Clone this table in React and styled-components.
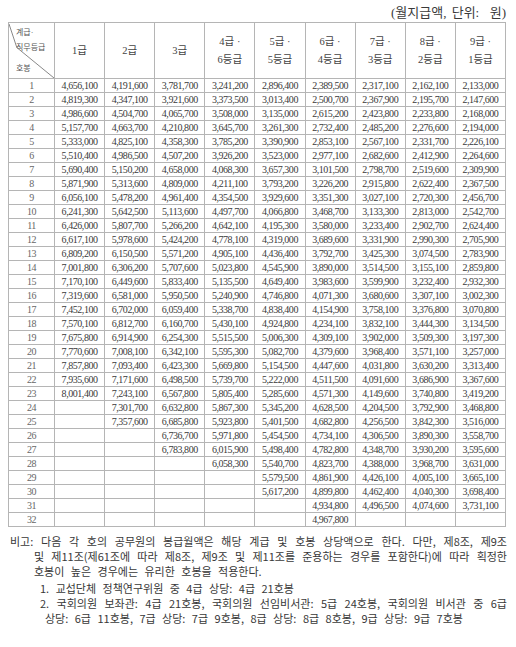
import React from "react";
import styled, { createGlobalStyle } from "styled-components";

const GlobalStyle = createGlobalStyle`
  html, body {
    margin: 0;
    padding: 0;
    background: #ffffff;
  }
  body {
    font-family: "Liberation Serif", "Noto Sans CJK KR", serif;
    color: #333333;
  }
`;

const grades = [
  ["1급"],
  ["2급"],
  ["3급"],
  ["4급 ·", "6등급"],
  ["5급 ·", "5등급"],
  ["6급 ·", "4등급"],
  ["7급 ·", "3등급"],
  ["8급 ·", "2등급"],
  ["9급 ·", "1등급"],
];

const rows = [
  "4,656,100 4,191,600 3,781,700 3,241,200 2,896,400 2,389,500 2,317,100 2,162,100 2,133,000",
  "4,819,300 4,347,100 3,921,600 3,373,500 3,013,400 2,500,700 2,367,900 2,195,700 2,147,600",
  "4,986,600 4,504,700 4,065,700 3,508,000 3,135,000 2,615,200 2,423,800 2,233,800 2,168,000",
  "5,157,700 4,663,700 4,210,800 3,645,700 3,261,300 2,732,400 2,485,200 2,276,600 2,194,000",
  "5,333,000 4,825,100 4,358,300 3,785,200 3,390,900 2,853,100 2,567,100 2,331,700 2,226,100",
  "5,510,400 4,986,500 4,507,200 3,926,200 3,523,000 2,977,100 2,682,600 2,412,900 2,264,600",
  "5,690,400 5,150,200 4,658,000 4,068,300 3,657,300 3,101,500 2,798,700 2,519,600 2,309,900",
  "5,871,900 5,313,600 4,809,000 4,211,100 3,793,200 3,226,200 2,915,800 2,622,400 2,367,500",
  "6,056,100 5,478,200 4,961,400 4,354,500 3,929,600 3,351,300 3,027,100 2,720,300 2,456,700",
  "6,241,300 5,642,500 5,113,600 4,497,700 4,066,800 3,468,700 3,133,300 2,813,000 2,542,700",
  "6,426,000 5,807,700 5,266,200 4,642,100 4,195,300 3,580,000 3,233,400 2,902,700 2,624,400",
  "6,617,100 5,978,600 5,424,200 4,778,100 4,319,000 3,689,600 3,331,900 2,990,300 2,705,900",
  "6,809,200 6,150,500 5,571,200 4,905,100 4,436,400 3,792,700 3,425,300 3,074,500 2,783,900",
  "7,001,800 6,306,200 5,707,600 5,023,800 4,545,900 3,890,000 3,514,500 3,155,100 2,859,800",
  "7,170,100 6,449,600 5,833,400 5,135,500 4,649,400 3,983,600 3,599,900 3,232,400 2,932,300",
  "7,319,600 6,581,000 5,950,500 5,240,900 4,746,800 4,071,300 3,680,600 3,307,100 3,002,300",
  "7,452,100 6,702,000 6,059,400 5,338,700 4,838,400 4,154,900 3,758,100 3,376,800 3,070,800",
  "7,570,100 6,812,700 6,160,700 5,430,100 4,924,800 4,234,100 3,832,100 3,444,300 3,134,500",
  "7,675,800 6,914,900 6,254,300 5,515,500 5,006,300 4,309,100 3,902,000 3,509,300 3,197,300",
  "7,770,600 7,008,100 6,342,100 5,595,300 5,082,700 4,379,600 3,968,400 3,571,100 3,257,000",
  "7,857,800 7,093,400 6,423,300 5,669,800 5,154,500 4,447,600 4,031,800 3,630,200 3,313,400",
  "7,935,600 7,171,600 6,498,500 5,739,700 5,222,000 4,511,500 4,091,600 3,686,900 3,367,600",
  "8,001,400 7,243,100 6,567,800 5,805,400 5,285,600 4,571,300 4,149,600 3,740,800 3,419,200",
  "- 7,301,700 6,632,800 5,867,300 5,345,200 4,628,500 4,204,500 3,792,900 3,468,800",
  "- 7,357,600 6,685,800 5,923,800 5,401,500 4,682,800 4,256,500 3,842,300 3,516,000",
  "- - 6,736,700 5,971,800 5,454,500 4,734,100 4,306,500 3,890,300 3,558,700",
  "- - 6,783,800 6,015,900 5,498,400 4,782,800 4,348,700 3,930,200 3,595,600",
  "- - - 6,058,300 5,540,700 4,823,700 4,388,000 3,968,700 3,631,000",
  "- - - - 5,579,500 4,861,900 4,426,100 4,005,100 3,665,100",
  "- - - - 5,617,200 4,899,800 4,462,400 4,040,300 3,698,400",
  "- - - - - 4,934,800 4,496,500 4,074,600 3,731,100",
  "- - - - - 4,967,800 - - -",
].map((r) => r.split(" ").map((v) => (v === "-" ? "" : v)));

const Page = styled.div`
  width: 516px;
  padding: 0 8px;
  box-sizing: border-box;
`;

const Unit = styled.div`
  height: 22px;
  padding-right: 2px;
  font-size: 13px;
  line-height: 26px;
  word-spacing: 2px;
  text-align: right;
  white-space: pre;
  color: #3a3a3a;
`;

const Table = styled.table`
  width: 498px;
  border-collapse: collapse;
  table-layout: fixed;
  border: 1px solid #9c9c9c;
`;

const HeadCell = styled.th`
  height: 55px;
  padding: 0;
  border: 1px solid #b5b5b5;
  font-weight: normal;
  font-size: 10.5px;
  line-height: 18px;
  color: #444;
  text-align: center;
  vertical-align: middle;
`;

const CornerCell = styled(HeadCell)`
  position: relative;
  width: 45px;
`;

const CornerLine = styled.svg`
  position: absolute;
  inset: 0;
  width: 100%;
  height: 100%;
`;

const CornerLabels = styled.div`
  display: flex;
  flex-direction: column;
  align-items: flex-start;
  height: 55px;
  padding: 2px 0 0 7px;
  box-sizing: border-box;
  font-size: 8px;
  line-height: 15px;
  color: #555;
`;

const CornerBottom = styled.span`
  margin-top: auto;
  line-height: 14px;
  padding-bottom: 2px;
`;

const Cell = styled.td`
  height: 13px;
  padding: 0;
  border: 1px solid #b5b5b5;
  font-size: 10px;
  line-height: 13px;
  letter-spacing: -0.45px;
  text-align: center;
  color: ${(p) => (p.$label ? "#666" : "#3a3a3a")};
  white-space: nowrap;
`;

const Notes = styled.div`
  padding: 7px 1px 0 2px;
  font-family: "Noto Sans CJK KR", "Liberation Serif", sans-serif;
  font-size: 11px;
  line-height: 15px;
  color: #383838;
`;

const NoteLine = styled.div`
  padding-left: ${(p) => p.$indent || 0}px;
  margin-top: ${(p) => p.$gap || 0}px;
  text-align: ${(p) => (p.$justify ? "justify" : "left")};
  text-align-last: ${(p) => (p.$justify ? "justify" : "left")};
  word-spacing: ${(p) => (p.$justify ? "0" : "4px")};
  white-space: nowrap;
`;

export default function App() {
  return (
    <Page>
      <GlobalStyle />
      <Unit>{"(월지급액, 단위:  원)"}</Unit>
      <Table>
        <thead>
          <tr>
            <CornerCell>
              <CornerLine viewBox="0 0 46 56" preserveAspectRatio="none">
                <polyline points="0,1 8,25 46,56" fill="none" stroke="#666" strokeWidth="0.8" />
              </CornerLine>
              <CornerLabels>
                <span>계급·</span>
                <span>직무등급</span>
                <CornerBottom>호봉</CornerBottom>
              </CornerLabels>
            </CornerCell>
            {grades.map((g, i) => (
              <HeadCell key={i}>
                {g.map((line, j) => (
                  <div key={j}>{line}</div>
                ))}
              </HeadCell>
            ))}
          </tr>
        </thead>
        <tbody>
          {rows.map((r, i) => (
            <tr key={i}>
              <Cell $label>{i + 1}</Cell>
              {r.map((v, j) => (
                <Cell key={j}>{v}</Cell>
              ))}
            </tr>
          ))}
        </tbody>
      </Table>
      <Notes>
        <NoteLine $justify>
          비고: 다음 각 호의 공무원의 봉급월액은 해당 계급 및 호봉 상당액으로 한다. 다만, 제8조, 제9조
        </NoteLine>
        <NoteLine $justify $indent={24}>
          및 제11조(제61조에 따라 제8조, 제9조 및 제11조를 준용하는 경우를 포함한다)에 따라 획정한
        </NoteLine>
        <NoteLine $indent={24}>호봉이 높은 경우에는 유리한 호봉을 적용한다.</NoteLine>
        <NoteLine $indent={30} $gap={2}>
          1. 교섭단체 정책연구위원 중 4급 상당: 4급 21호봉
        </NoteLine>
        <NoteLine $justify $indent={30}>
          2. 국회의원 보좌관: 4급 21호봉, 국회의원 선임비서관: 5급 24호봉, 국회의원 비서관 중 6급
        </NoteLine>
        <NoteLine $indent={35}>
          상당: 6급 11호봉, 7급 상당: 7급 9호봉, 8급 상당: 8급 8호봉, 9급 상당: 9급 7호봉
        </NoteLine>
      </Notes>
    </Page>
  );
}
